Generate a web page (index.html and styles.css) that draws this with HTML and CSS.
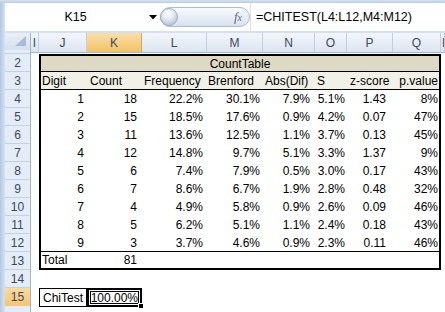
FILE: index.html
```html
<!DOCTYPE html>
<html>
<head>
<meta charset="utf-8">
<link rel="stylesheet" href="styles.css">
</head>
<body>
<div class="topband"></div>
<div class="window">
  <div class="frame"></div>
  <div class="main">
    <div class="fbar">
      <div class="namebox">K15</div>
      <div class="dd"><svg width="8" height="5" viewBox="0 0 8 5"><polygon points="0,0 8,0 4,4.5" fill="#000"/></svg></div>
      <div class="pill"><span class="orb"></span><span class="fx"><i>f</i><i class="x">x</i></span></div>
      <div class="formula">=CHITEST(L4:L12,M4:M12)</div>
    </div>
    <div class="gap"></div>
    <div class="sheet">
      <div class="r hd">
        <div class="corner"><svg width="25" height="16" viewBox="0 0 25 16"><polygon points="21,3 21,13 10,13" fill="#a8bcd6"/></svg></div>
        <div class="ch">I</div><div class="ch">J</div><div class="ch sel">K</div><div class="ch">L</div><div class="ch">M</div><div class="ch">N</div><div class="ch">O</div><div class="ch">P</div><div class="ch">Q</div><div class="ch edge">R</div>
      </div>
      <div class="r r1"><div class="rh"></div></div>
      <div class="r"><div class="rh">2</div><div></div><div class="title">CountTable</div></div>
      <div class="r hrow"><div class="rh">3</div><div></div>
        <div class="t cj">Digit</div><div class="t ck">Count</div><div class="t cl">Frequency</div><div class="t cm">Brenford</div><div class="t cn">Abs(Dif)</div><div class="t co">S</div><div class="t cp">z-score</div><div class="t cq">p.value</div>
      </div>
      <div class="r"><div class="rh">4</div><div></div><div class="t cj">1</div><div class="t ck">18</div><div class="t cl">22.2%</div><div class="t cm">30.1%</div><div class="t cn">7.9%</div><div class="t co">5.1%</div><div class="t cp">1.43</div><div class="t cq">8%</div></div>
      <div class="r"><div class="rh">5</div><div></div><div class="t cj">2</div><div class="t ck">15</div><div class="t cl">18.5%</div><div class="t cm">17.6%</div><div class="t cn">0.9%</div><div class="t co">4.2%</div><div class="t cp">0.07</div><div class="t cq">47%</div></div>
      <div class="r"><div class="rh">6</div><div></div><div class="t cj">3</div><div class="t ck">11</div><div class="t cl">13.6%</div><div class="t cm">12.5%</div><div class="t cn">1.1%</div><div class="t co">3.7%</div><div class="t cp">0.13</div><div class="t cq">45%</div></div>
      <div class="r"><div class="rh">7</div><div></div><div class="t cj">4</div><div class="t ck">12</div><div class="t cl">14.8%</div><div class="t cm">9.7%</div><div class="t cn">5.1%</div><div class="t co">3.3%</div><div class="t cp">1.37</div><div class="t cq">9%</div></div>
      <div class="r"><div class="rh">8</div><div></div><div class="t cj">5</div><div class="t ck">6</div><div class="t cl">7.4%</div><div class="t cm">7.9%</div><div class="t cn">0.5%</div><div class="t co">3.0%</div><div class="t cp">0.17</div><div class="t cq">43%</div></div>
      <div class="r"><div class="rh">9</div><div></div><div class="t cj">6</div><div class="t ck">7</div><div class="t cl">8.6%</div><div class="t cm">6.7%</div><div class="t cn">1.9%</div><div class="t co">2.8%</div><div class="t cp">0.48</div><div class="t cq">32%</div></div>
      <div class="r"><div class="rh">10</div><div></div><div class="t cj">7</div><div class="t ck">4</div><div class="t cl">4.9%</div><div class="t cm">5.8%</div><div class="t cn">0.9%</div><div class="t co">2.6%</div><div class="t cp">0.09</div><div class="t cq">46%</div></div>
      <div class="r"><div class="rh">11</div><div></div><div class="t cj">8</div><div class="t ck">5</div><div class="t cl">6.2%</div><div class="t cm">5.1%</div><div class="t cn">1.1%</div><div class="t co">2.4%</div><div class="t cp">0.18</div><div class="t cq">43%</div></div>
      <div class="r last"><div class="rh">12</div><div></div><div class="t cj">9</div><div class="t ck">3</div><div class="t cl">3.7%</div><div class="t cm">4.6%</div><div class="t cn">0.9%</div><div class="t co">2.3%</div><div class="t cp">0.11</div><div class="t cq">46%</div></div>
      <div class="r total"><div class="rh">13</div><div></div><div class="t cj lab">Total</div><div class="t ck">81</div><div class="t"></div><div class="t"></div><div class="t"></div><div class="t"></div><div class="t"></div><div class="t cq"></div></div>
      <div class="r"><div class="rh">14</div></div>
      <div class="r"><div class="rh sel">15</div><div></div><div class="chi">ChiTest</div><div class="active">100.00%<span class="handle"></span></div></div>
      <div class="r"><div class="rh"></div></div>
    </div>
  </div>
</div>
</body>
</html>
```

FILE: styles.css
```css
* { box-sizing: border-box; }
body {
  margin: 0;
  width: 445px;
  height: 312px;
  overflow: hidden;
  background: #fff;
  font-family: "Liberation Sans", Arial, sans-serif;
  font-size: 12px;
  color: #000;
}
.topband {
  height: 3px;
  background: linear-gradient(#d6e2f1, #b9cce4);
}
.window { display: flex; }
.frame {
  width: 5px;
  flex: none;
  background: linear-gradient(to right, #b3c8e3, #d5e2f2);
}
.main { width: 440px; flex: none; }
.fbar {
  height: 28px;
  display: flex;
  align-items: center;
  background: #fff;
}
.namebox {
  width: 141px;
  text-align: center;
  font-size: 12.5px;
}
.dd {
  width: 14px;
  display: flex;
  justify-content: center;
}
.pill {
  width: 90px;
  height: 20px;
  border: 1px solid #a9bcd3;
  border-radius: 10px;
  background: linear-gradient(#f8fafd, #d8e2ee);
  display: flex;
  align-items: center;
  justify-content: space-between;
}
.orb {
  width: 18px;
  height: 18px;
  margin-left: -1px;
  border-radius: 50%;
  border: 1px solid #9aadc6;
  background: radial-gradient(circle at 45% 30%, #ffffff 0, #e6edf5 35%, #bccadd 75%, #a2b4cb 100%);
}
.fx {
  font-family: "Liberation Serif", serif;
  color: #5b6b80;
  font-size: 13px;
  margin-right: 7px;
}
.fx .x { font-size: 10px; }
.formula {
  flex: 1;
  height: 100%;
  border-left: 1px solid #dbe2ec;
  padding-left: 5px;
  display: flex;
  align-items: center;
  font-size: 12.5px;
}
.gap {
  height: 2px;
  background: #d4e0ef;
}
.r {
  display: grid;
  grid-template-columns: 26px 8px 48px 55px 65px 56px 52px 32px 46px 48px 4px;
  height: 18px;
}
.r > div { white-space: nowrap; }
.hd { height: 17px; }
.corner {
  background: linear-gradient(#e9eff8, #d3deed);
  border-right: 1px solid #9eb6ce;
  border-bottom: 1px solid #9eb6ce;
}
.ch {
  display: flex;
  align-items: center;
  justify-content: center;
  color: #3a4a60;
  background: linear-gradient(#f3f6fb, #dce5f1);
  border-right: 1px solid #c0cee0;
  border-bottom: 1px solid #9eb6ce;
}
.ch.edge {
  justify-content: flex-start;
  padding-left: 1px;
  overflow: hidden;
}
.ch.sel {
  background: linear-gradient(#fadfa9, #f3c266);
  border-right-color: #d8a94f;
}
.r1 { height: 4px; }
.rh {
  display: flex;
  align-items: center;
  justify-content: center;
  color: #3a4a60;
  background: #e4ecf7;
  border-right: 1px solid #9eb6ce;
  border-bottom: 1px solid #c3d1e4;
}
.rh.sel {
  background: linear-gradient(#fadb9c, #f5c470);
  border-bottom-color: #d8a94f;
}
.title {
  grid-column: span 8;
  background: #ddd9c4;
  border: 2px solid #000;
  border-bottom: 1px solid #000;
  display: flex;
  align-items: center;
  justify-content: center;
}
.t {
  display: flex;
  align-items: center;
  justify-content: flex-end;
}
.cj { border-left: 2px solid #000; padding-right: 3px; }
.ck { padding-right: 5px; }
.cl { padding-right: 4px; }
.cm { padding-right: 3px; }
.cn { padding-right: 5px; }
.co { padding-right: 2px; }
.cp { padding-right: 7px; }
.cq { border-right: 2px solid #000; padding-right: 1px; }
.hrow .t {
  justify-content: flex-start;
  background: #f1f1e7;
  border-bottom: 1px solid #000;
}
.hrow .cj { padding-left: 1px; }
.hrow .ck { padding-left: 3px; }
.hrow .cl { padding-left: 2px; }
.hrow .cm { padding-left: 1px; }
.hrow .cn { padding-left: 2px; }
.hrow .co { padding-left: 2px; }
.hrow .cp { padding-left: 3px; }
.hrow .cq { justify-content: flex-end; }
.last .t { border-bottom: 1px solid #000; }
.total .t { border-bottom: 2px solid #000; }
.total .lab { justify-content: flex-start; padding-left: 1px; }
.chi {
  border: 1px solid #000;
  display: flex;
  align-items: center;
  padding-left: 3px;
  height: 19px;
}
.active {
  position: relative;
  height: 19px;
  border: 2px solid #000;
  box-shadow: inset 0 0 0 1px #fff, inset 0 0 0 2px #000;
  display: flex;
  align-items: center;
  justify-content: flex-end;
  padding-right: 2px;
}
.handle {
  position: absolute;
  right: -4px;
  bottom: -4px;
  width: 6px;
  height: 6px;
  background: #000;
  border: 1px solid #fff;
}
```
